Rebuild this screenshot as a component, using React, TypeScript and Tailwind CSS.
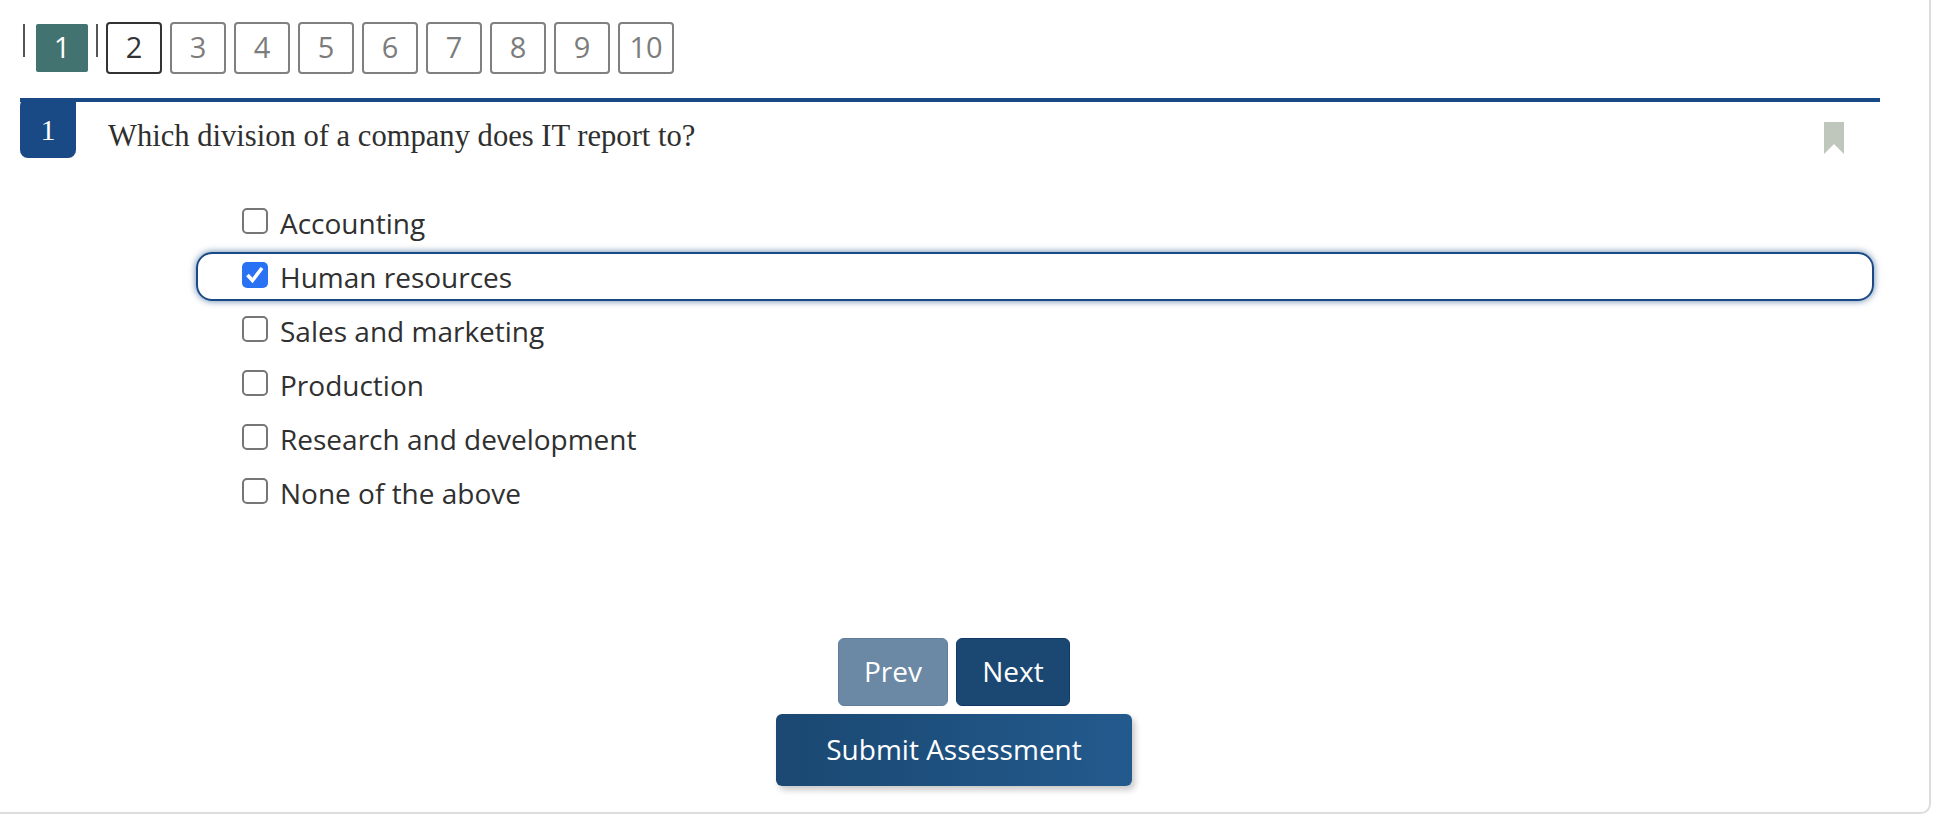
const sansFont = "font-['Open_Sans','Noto_Sans',sans-serif]";

const options = [
  { label: "Accounting", checked: false },
  { label: "Human resources", checked: true },
  { label: "Sales and marketing", checked: false },
  { label: "Production", checked: false },
  { label: "Research and development", checked: false },
  { label: "None of the above", checked: false },
];

function PageBox({ n, current }: { n: number; current?: boolean }) {
  return (
    <div
      className={`flex h-[52px] w-[56px] items-center justify-center rounded-[4px] border-2 pb-[2px] text-[29px] ${
        current ? "border-[#333333] text-[#333333]" : "border-[#808080] text-[#7c7c7c]"
      }`}
    >
      {n}
    </div>
  );
}

function Option({ label, checked }: { label: string; checked: boolean }) {
  return (
    <div
      className={`mb-[5px] flex h-[49px] items-start rounded-[16px] border-2 pl-[44px] pt-[8px] ${
        checked
          ? "border-[#1a4a85] shadow-[0_0_7px_rgba(26,74,133,0.7)]"
          : "border-transparent"
      }`}
    >
      {checked ? (
        <span className="h-[26px] w-[26px] rounded-[5px] bg-[#2a72f4]">
          <svg width="26" height="26" viewBox="0 0 26 26" fill="none">
            <path d="M5.5 13 L10.5 18.5 L20 6" stroke="#ffffff" strokeWidth="3.6" />
          </svg>
        </span>
      ) : (
        <span className="h-[26px] w-[26px] rounded-[5px] border-2 border-[#767676] bg-white" />
      )}
      <span className="ml-[12px] -mt-[3px] text-[28px] leading-[36px] text-[#303030]">{label}</span>
    </div>
  );
}

export default function App() {
  return (
    <div className="h-[824px] w-[1958px] overflow-hidden bg-white">
      <div className={`h-[814px] w-[1931px] rounded-br-[10px] border-r-2 border-b-2 border-[#dddddd] ${sansFont}`}>
        <div className="flex items-start pl-[23px] pt-[22px]">
          <div className="mt-[2px] h-[33px] w-[2px] bg-[#555555]" />
          <div className="ml-[11px] mt-[2px] flex h-[48px] w-[52px] items-center justify-center rounded-[2px] bg-[#437370] pb-[2px] text-[29px] text-white">
            1
          </div>
          <div className="ml-[8px] mt-[2px] h-[33px] w-[2px] bg-[#555555]" />
          <div className="ml-[8px] flex gap-[8px]">
            {[2, 3, 4, 5, 6, 7, 8, 9, 10].map((n) => (
              <PageBox key={n} n={n} current={n === 2} />
            ))}
          </div>
        </div>

        <div className="ml-[20px] mt-[24px] w-[1860px] border-t-4 border-[#1a4a85]">
          <div className="flex items-start">
            <div className="-mt-[4px] flex h-[60px] w-[56px] items-start justify-center rounded-tl-[8px] rounded-b-[8px] bg-[#1a4a85] pt-[15px] font-['Liberation_Serif',serif] text-[30px] leading-[34px] text-white">
              1
            </div>
            <p className="ml-[32px] mt-[16px] font-['Liberation_Serif',serif] text-[30.6px] leading-[36px] text-[#2f2f2f]">
              Which division of a company does IT report to?
            </p>
            <svg className="ml-auto mr-[36px] mt-[20px]" width="20" height="32" viewBox="0 0 20 32">
              <polygon points="0,0 20,0 20,32 10,22 0,32" fill="#bfc6bb" />
            </svg>
          </div>
        </div>

        <div className="ml-[196px] mt-[40px] w-[1678px]">
          {options.map((o) => (
            <Option key={o.label} label={o.label} checked={o.checked} />
          ))}
        </div>

        <div className="mt-[121px] flex w-[1908px] flex-col items-center gap-[8px] text-[28px] text-white">
          <div className="flex gap-[8px]">
            <button
              type="button"
              className="h-[68px] w-[110px] rounded-[6px] border border-[#5f7d9c] bg-[#6b88a5] pb-[2px]"
            >
              Prev
            </button>
            <button
              type="button"
              className="h-[68px] w-[114px] rounded-[6px] border border-[#123a66] bg-[#1b4872] pb-[2px]"
            >
              Next
            </button>
          </div>
          <button
            type="button"
            className="h-[72px] w-[356px] rounded-[6px] bg-gradient-to-r from-[#1a4872] to-[#235a8d] pb-[2px] shadow-[3px_4px_6px_rgba(0,0,0,0.22)]"
          >
            Submit Assessment
          </button>
        </div>
      </div>
    </div>
  );
}
